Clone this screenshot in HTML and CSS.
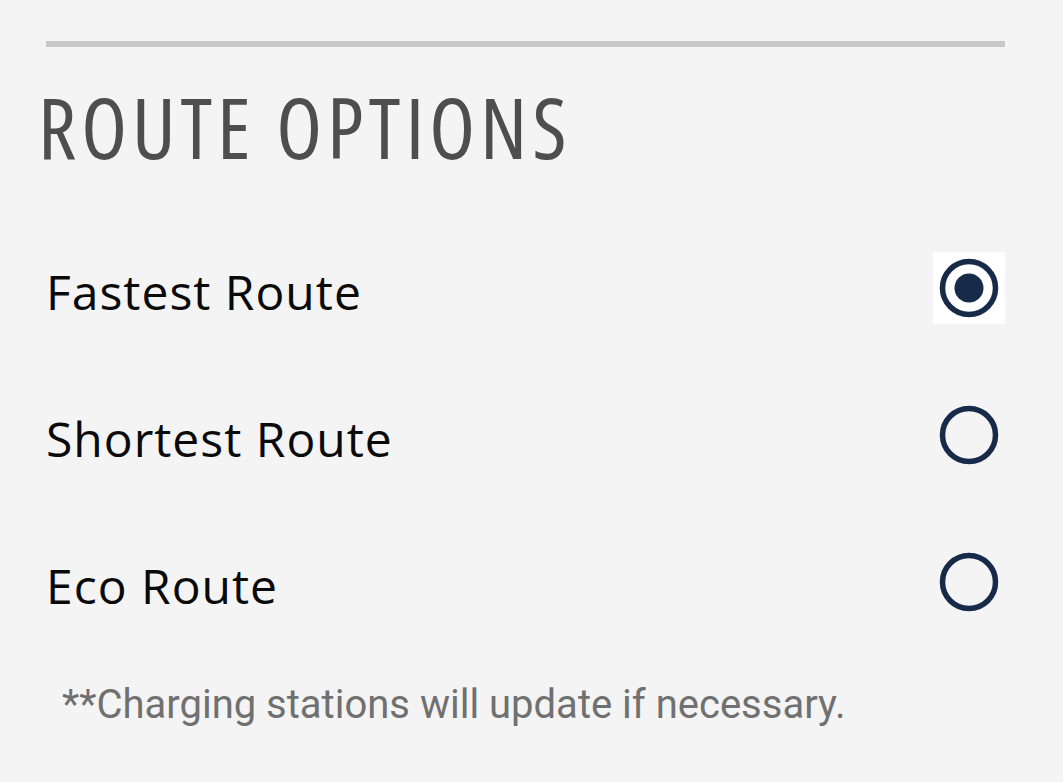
FILE: index.html
```html
<!DOCTYPE html>
<html>
<head>
<meta charset="utf-8">
<link rel="stylesheet" href="styles.css">
</head>
<body>
<div class="panel">
  <div class="divider"></div>
  <h1 class="title">ROUTE OPTIONS</h1>
  <div class="options">
    <div class="option">
      <span class="label">Fastest Route</span>
      <span class="radio selected">
        <svg width="72" height="72" viewBox="0 0 72 72"><circle cx="36" cy="36" r="26.5" fill="none" stroke="#172a4a" stroke-width="5.5"/><circle cx="36" cy="36" r="14.5" fill="#172a4a"/></svg>
      </span>
    </div>
    <div class="option">
      <span class="label">Shortest Route</span>
      <span class="radio">
        <svg width="72" height="72" viewBox="0 0 72 72"><circle cx="36" cy="36" r="26.5" fill="none" stroke="#172a4a" stroke-width="5.5"/></svg>
      </span>
    </div>
    <div class="option">
      <span class="label">Eco Route</span>
      <span class="radio">
        <svg width="72" height="72" viewBox="0 0 72 72"><circle cx="36" cy="36" r="26.5" fill="none" stroke="#172a4a" stroke-width="5.5"/></svg>
      </span>
    </div>
  </div>
  <p class="note">**Charging stations will update if necessary.</p>
</div>
</body>
</html>
```
FILE: styles.css
```css
html, body {
  margin: 0;
  padding: 0;
  background: #f4f4f4;
}
.panel {
  width: 1063px;
  height: 782px;
  box-sizing: border-box;
  padding: 41px 58px 0 46px;
  display: flex;
  flex-direction: column;
}
.divider {
  height: 6px;
  background: #c8c8c8;
}
.title {
  margin: 0;
  margin-left: -8px;
  height: 205px;
  padding-top: 35px;
  box-sizing: border-box;
  font-family: "Open Sans", sans-serif;
  font-stretch: 75%;
  font-weight: 400;
  font-size: 84px;
  line-height: 90px;
  color: #4e4e4e;
  letter-spacing: 5px;
}
.options {
  display: flex;
  flex-direction: column;
  gap: 75px;
}
.option {
  display: flex;
  align-items: center;
  justify-content: space-between;
  height: 72px;
}
.label {
  font-family: "Open Sans", sans-serif;
  font-size: 48px;
  line-height: 72px;
  padding-top: 8px;
  color: #0a0a0a;
  letter-spacing: 1px;
}
.radio {
  width: 72px;
  height: 72px;
  display: block;
}
.radio svg {
  display: block;
}
.radio.selected {
  background: #ffffff;
}
.note {
  margin: 65px 0 0 16px;
  font-family: "Roboto", sans-serif;
  font-size: 40px;
  line-height: 44px;
  color: #707070;
}
```
